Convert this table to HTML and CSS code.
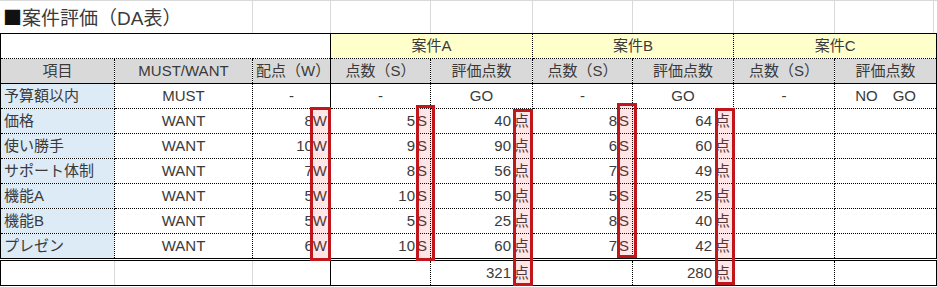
FILE: index.html
```html
<!DOCTYPE html>
<html lang="ja">
<head>
<meta charset="utf-8">
<title>案件評価（DA表）</title>
<link rel="stylesheet" href="styles.css">
</head>
<body>
<div class="sheet">
  <div class="title-row">
    <div class="tcell w-ab"><span class="cjk">■</span>案件評価（DA表）</div>
    <div class="tcell w-c"></div>
    <div class="tcell w-d"></div>
    <div class="tcell w-e"></div>
    <div class="tcell w-f"></div>
    <div class="tcell w-g"></div>
    <div class="tcell w-h"></div>
    <div class="tcell w-i"></div>
  </div>
  <div class="table-wrap">
    <table class="da">
      <colgroup>
        <col class="col-a"><col class="col-b"><col class="col-c"><col class="col-d"><col class="col-e"><col class="col-f"><col class="col-g"><col class="col-h"><col class="col-i">
      </colgroup>
      <tr class="group">
        <td colspan="3" class="blank"></td>
        <td colspan="2" class="case split">案件A</td>
        <td colspan="2" class="case">案件B</td>
        <td colspan="2" class="case">案件C</td>
      </tr>
      <tr class="head">
        <td>項目</td>
        <td>MUST/WANT</td>
        <td>配点（W）</td>
        <td class="split">点数（S）</td>
        <td>評価点数</td>
        <td>点数（S）</td>
        <td>評価点数</td>
        <td>点数（S）</td>
        <td>評価点数</td>
      </tr>
      <tr>
        <td class="item">予算額以内</td>
        <td class="c">MUST</td>
        <td class="c">-</td>
        <td class="c split">-</td>
        <td class="c">GO</td>
        <td class="c">-</td>
        <td class="c">GO</td>
        <td class="c">-</td>
        <td class="c">NO　GO</td>
      </tr>
      <tr>
        <td class="item">価格</td>
        <td class="c">WANT</td>
        <td class="r">8W</td>
        <td class="r split">5<span class="s">S</span></td>
        <td class="r">40<span class="unit">点</span></td>
        <td class="r">8<span class="s">S</span></td>
        <td class="r">64<span class="unit">点</span></td>
        <td></td>
        <td></td>
      </tr>
      <tr>
        <td class="item">使い勝手</td>
        <td class="c">WANT</td>
        <td class="r">10W</td>
        <td class="r split">9<span class="s">S</span></td>
        <td class="r">90<span class="unit">点</span></td>
        <td class="r">6<span class="s">S</span></td>
        <td class="r">60<span class="unit">点</span></td>
        <td></td>
        <td></td>
      </tr>
      <tr>
        <td class="item">サポート体制</td>
        <td class="c">WANT</td>
        <td class="r">7W</td>
        <td class="r split">8<span class="s">S</span></td>
        <td class="r">56<span class="unit">点</span></td>
        <td class="r">7<span class="s">S</span></td>
        <td class="r">49<span class="unit">点</span></td>
        <td></td>
        <td></td>
      </tr>
      <tr>
        <td class="item">機能A</td>
        <td class="c">WANT</td>
        <td class="r">5W</td>
        <td class="r split">10<span class="s">S</span></td>
        <td class="r">50<span class="unit">点</span></td>
        <td class="r">5<span class="s">S</span></td>
        <td class="r">25<span class="unit">点</span></td>
        <td></td>
        <td></td>
      </tr>
      <tr>
        <td class="item">機能B</td>
        <td class="c">WANT</td>
        <td class="r">5W</td>
        <td class="r split">5<span class="s">S</span></td>
        <td class="r">25<span class="unit">点</span></td>
        <td class="r">8<span class="s">S</span></td>
        <td class="r">40<span class="unit">点</span></td>
        <td></td>
        <td></td>
      </tr>
      <tr>
        <td class="item">プレゼン</td>
        <td class="c">WANT</td>
        <td class="r">6W</td>
        <td class="r split">10<span class="s">S</span></td>
        <td class="r">60<span class="unit">点</span></td>
        <td class="r">7<span class="s">S</span></td>
        <td class="r">42<span class="unit">点</span></td>
        <td></td>
        <td></td>
      </tr>
      <tr class="total">
        <td class="grid"></td>
        <td class="grid"></td>
        <td></td>
        <td class="split"></td>
        <td class="r">321<span class="unit">点</span></td>
        <td></td>
        <td class="r">280<span class="unit">点</span></td>
        <td></td>
        <td></td>
      </tr>
    </table>
    <div class="mark mark-w"></div>
    <div class="mark mark-sa"></div>
    <div class="mark mark-pa"></div>
    <div class="mark mark-sb"></div>
    <div class="mark mark-pb"></div>
  </div>
</div>
</body>
</html>
```

FILE: styles.css
```css
html, body {
  margin: 0;
  padding: 0;
  background: #ffffff;
}

body {
  font-family: "Liberation Sans", "Noto Sans CJK JP", sans-serif;
  color: #3a3a3a;
  width: 937px;
  height: 287px;
  overflow: hidden;
}

.sheet {
  width: 937px;
}

.title-row {
  display: flex;
  height: 33px;
  border-top: 1px solid #d9d9d9;
  box-sizing: border-box;
}

.tcell {
  box-sizing: border-box;
  border-right: 1px solid #d9d9d9;
  height: 32px;
}

.w-ab { width: 253px; font-size: 19px; line-height: 32px; padding-left: 3px; white-space: nowrap; }
.w-c { width: 78px; }
.w-d { width: 100px; }
.w-e { width: 102px; }
.w-f { width: 100px; }
.w-g { width: 101px; }
.w-h { width: 101px; }
.w-i { width: 99px; }

.cjk {
  font-family: "Noto Sans CJK JP", sans-serif;
  color: #111111;
}

.table-wrap {
  position: relative;
  width: 937px;
}

.da {
  border-collapse: collapse;
  table-layout: fixed;
  width: 936px;
  font-size: 15px;
}

.col-a { width: 114px; }
.col-b { width: 138px; }
.col-c { width: 78px; }
.col-d { width: 100px; }
.col-e { width: 102px; }
.col-f { width: 100px; }
.col-g { width: 101px; }
.col-h { width: 101px; }
.col-i { width: 102px; }

.da td {
  border: 1px dotted #000000;
  height: 24px;
  padding: 0 3px;
  line-height: 22px;
  white-space: nowrap;
  overflow: hidden;
}

.da tr:first-child td { border-top: 1px solid #000000; }
.da td:first-child { border-left: 1px solid #000000; }
.da td:last-child { border-right: 1px solid #000000; }

.da .split { border-left: 1px solid #000000; }

.group .blank { border-left: 1px solid #000000; border-right: 1px solid #000000; background: #ffffff; }

.group .case {
  background: #ffffcc;
  text-align: center;
}

.head td {
  background: #d9d9d9;
  text-align: center;
  border-bottom: 1px solid #000000;
}

.item {
  background: #ddebf7;
  text-align: left;
}

.c { text-align: center; }
.r { text-align: right; }

.s { margin-left: 2px; }
.unit { margin-left: 3px; }

.total td {
  border-top: 3px double #000000;
  border-bottom: 1px solid #000000;
}

.total .grid { border-right: 1px solid #d9d9d9; }

.mark {
  position: absolute;
  box-sizing: border-box;
  border: 3px solid #c2161d;
  background: rgba(255, 40, 40, 0.12);
}

.mark-w { left: 310px; top: 74px; width: 21px; height: 154px; }
.mark-sa { left: 416px; top: 72px; width: 19px; height: 156px; }
.mark-pa { left: 513px; top: 76px; width: 20px; height: 177px; }
.mark-sb { left: 617px; top: 70px; width: 20px; height: 155px; }
.mark-pb { left: 715px; top: 75px; width: 20px; height: 177px; }
```
